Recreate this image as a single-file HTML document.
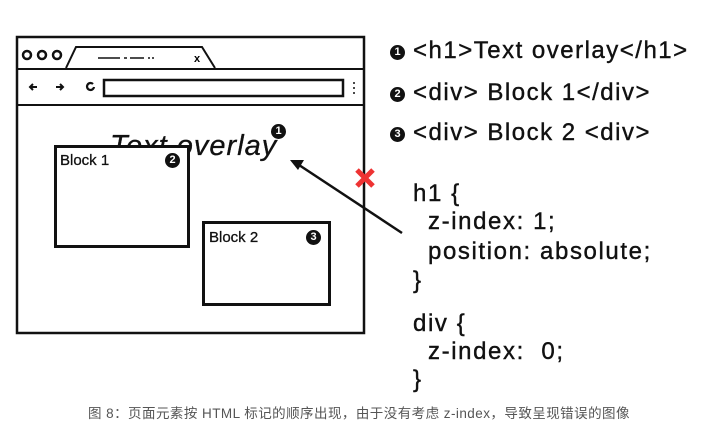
<html><head><style>
body{margin:0;width:712px;height:444px;background:#fff;position:relative;overflow:hidden;font-family:"Liberation Sans",sans-serif;color:#111}
.a{position:absolute;white-space:nowrap}
.r{font-size:24px;left:390px;letter-spacing:1.5px;-webkit-text-stroke:0.4px #111}
.b{display:inline-block;width:15px;height:15px;border-radius:50%;background:#111;color:#fff;font-size:11px;font-weight:bold;text-align:center;line-height:15px;vertical-align:3px;margin-right:8px;letter-spacing:0;-webkit-text-stroke:0}
.c{font-size:24px;letter-spacing:1.6px;-webkit-text-stroke:0.4px #111}
.box{position:absolute;border:3px solid #111;background:#fff;box-sizing:border-box}
</style></head><body>
<svg class="a" style="left:0;top:0" width="712" height="444">
<rect x="17" y="37" width="347" height="296" fill="none" stroke="#111" stroke-width="2.5"/>
<line x1="17" y1="69" x2="364" y2="69" stroke="#111" stroke-width="2"/>
<line x1="17" y1="105" x2="364" y2="105" stroke="#111" stroke-width="2"/>
<circle cx="27" cy="55" r="4" fill="none" stroke="#111" stroke-width="2.5"/>
<circle cx="42" cy="55" r="4" fill="none" stroke="#111" stroke-width="2.5"/>
<circle cx="57" cy="55" r="4" fill="none" stroke="#111" stroke-width="2.5"/>
<path d="M66 68 L76 47 L202 47 L215 68" fill="none" stroke="#111" stroke-width="2"/>
<path d="M98 58h22 M124 58h3 M130 58h14 M148 58h2 M152 58h2" stroke="#111" stroke-width="1.5"/>
<text x="194" y="62" font-size="11" font-weight="bold" font-family="Liberation Sans">x</text>
<path d="M30 87h7 M33 84l-3 3 3 3 M56 87h7 M60 84l3 3-3 3" stroke="#111" stroke-width="2" fill="none"/>
<path d="M93 84a3.5 3.5 0 1 0 1 3" stroke="#111" stroke-width="2.2" fill="none"/>
<rect x="104" y="80" width="239" height="16" fill="none" stroke="#111" stroke-width="2.5"/>
<circle cx="354" cy="83" r="1" fill="#111"/><circle cx="354" cy="88" r="1" fill="#111"/><circle cx="354" cy="93" r="1" fill="#111"/>
<line x1="402" y1="233" x2="296" y2="163" stroke="#111" stroke-width="2.5"/>
<path d="M290 160 L304 160 L298 170 Z" fill="#111"/>
<path d="M357 170l16 16 M373 170l-16 16" stroke="#e33" stroke-width="5"/>
</svg>
<div class="a" style="left:110px;top:130px;font-size:29px;font-style:italic;letter-spacing:1px;-webkit-text-stroke:0.3px #111">Text overlay</div>
<div class="a" style="left:271px;top:124px"><span class="b">1</span></div>
<div class="box" style="left:54px;top:145px;width:136px;height:103px"><span class="a" style="left:3px;top:4px;font-size:15px;-webkit-text-stroke:0.3px #111">Block 1</span><span class="a b" style="left:108px;top:5px">2</span></div>
<div class="box" style="left:202px;top:221px;width:129px;height:85px"><span class="a" style="left:4px;top:5px;font-size:15px;-webkit-text-stroke:0.3px #111">Block 2</span><span class="a b" style="left:101px;top:6px">3</span></div>
<div class="a r" style="top:37px"><span class="b">1</span>&lt;h1&gt;Text overlay&lt;/h1&gt;</div>
<div class="a r" style="top:79px"><span class="b">2</span>&lt;div&gt; Block 1&lt;/div&gt;</div>
<div class="a r" style="top:119px"><span class="b">3</span>&lt;div&gt; Block 2 &lt;div&gt;</div>
<div class="a c" style="left:413px;top:180px">h1 {</div>
<div class="a c" style="left:428px;top:208px">z-index: 1;</div>
<div class="a c" style="left:428px;top:238px">position: absolute;</div>
<div class="a c" style="left:413px;top:267px">}</div>
<div class="a c" style="left:413px;top:310px">div {</div>
<div class="a c" style="left:428px;top:338px">z-index:&nbsp; 0;</div>
<div class="a c" style="left:413px;top:366px">}</div>
<div class="a" style="left:88px;top:402px;font-size:13.5px;letter-spacing:0.45px;color:#555;font-family:'Liberation Sans','Noto Sans CJK SC',sans-serif">图 8：页面元素按 HTML 标记的顺序出现，由于没有考虑 z-index，导致呈现错误的图像</div>
</body></html>
